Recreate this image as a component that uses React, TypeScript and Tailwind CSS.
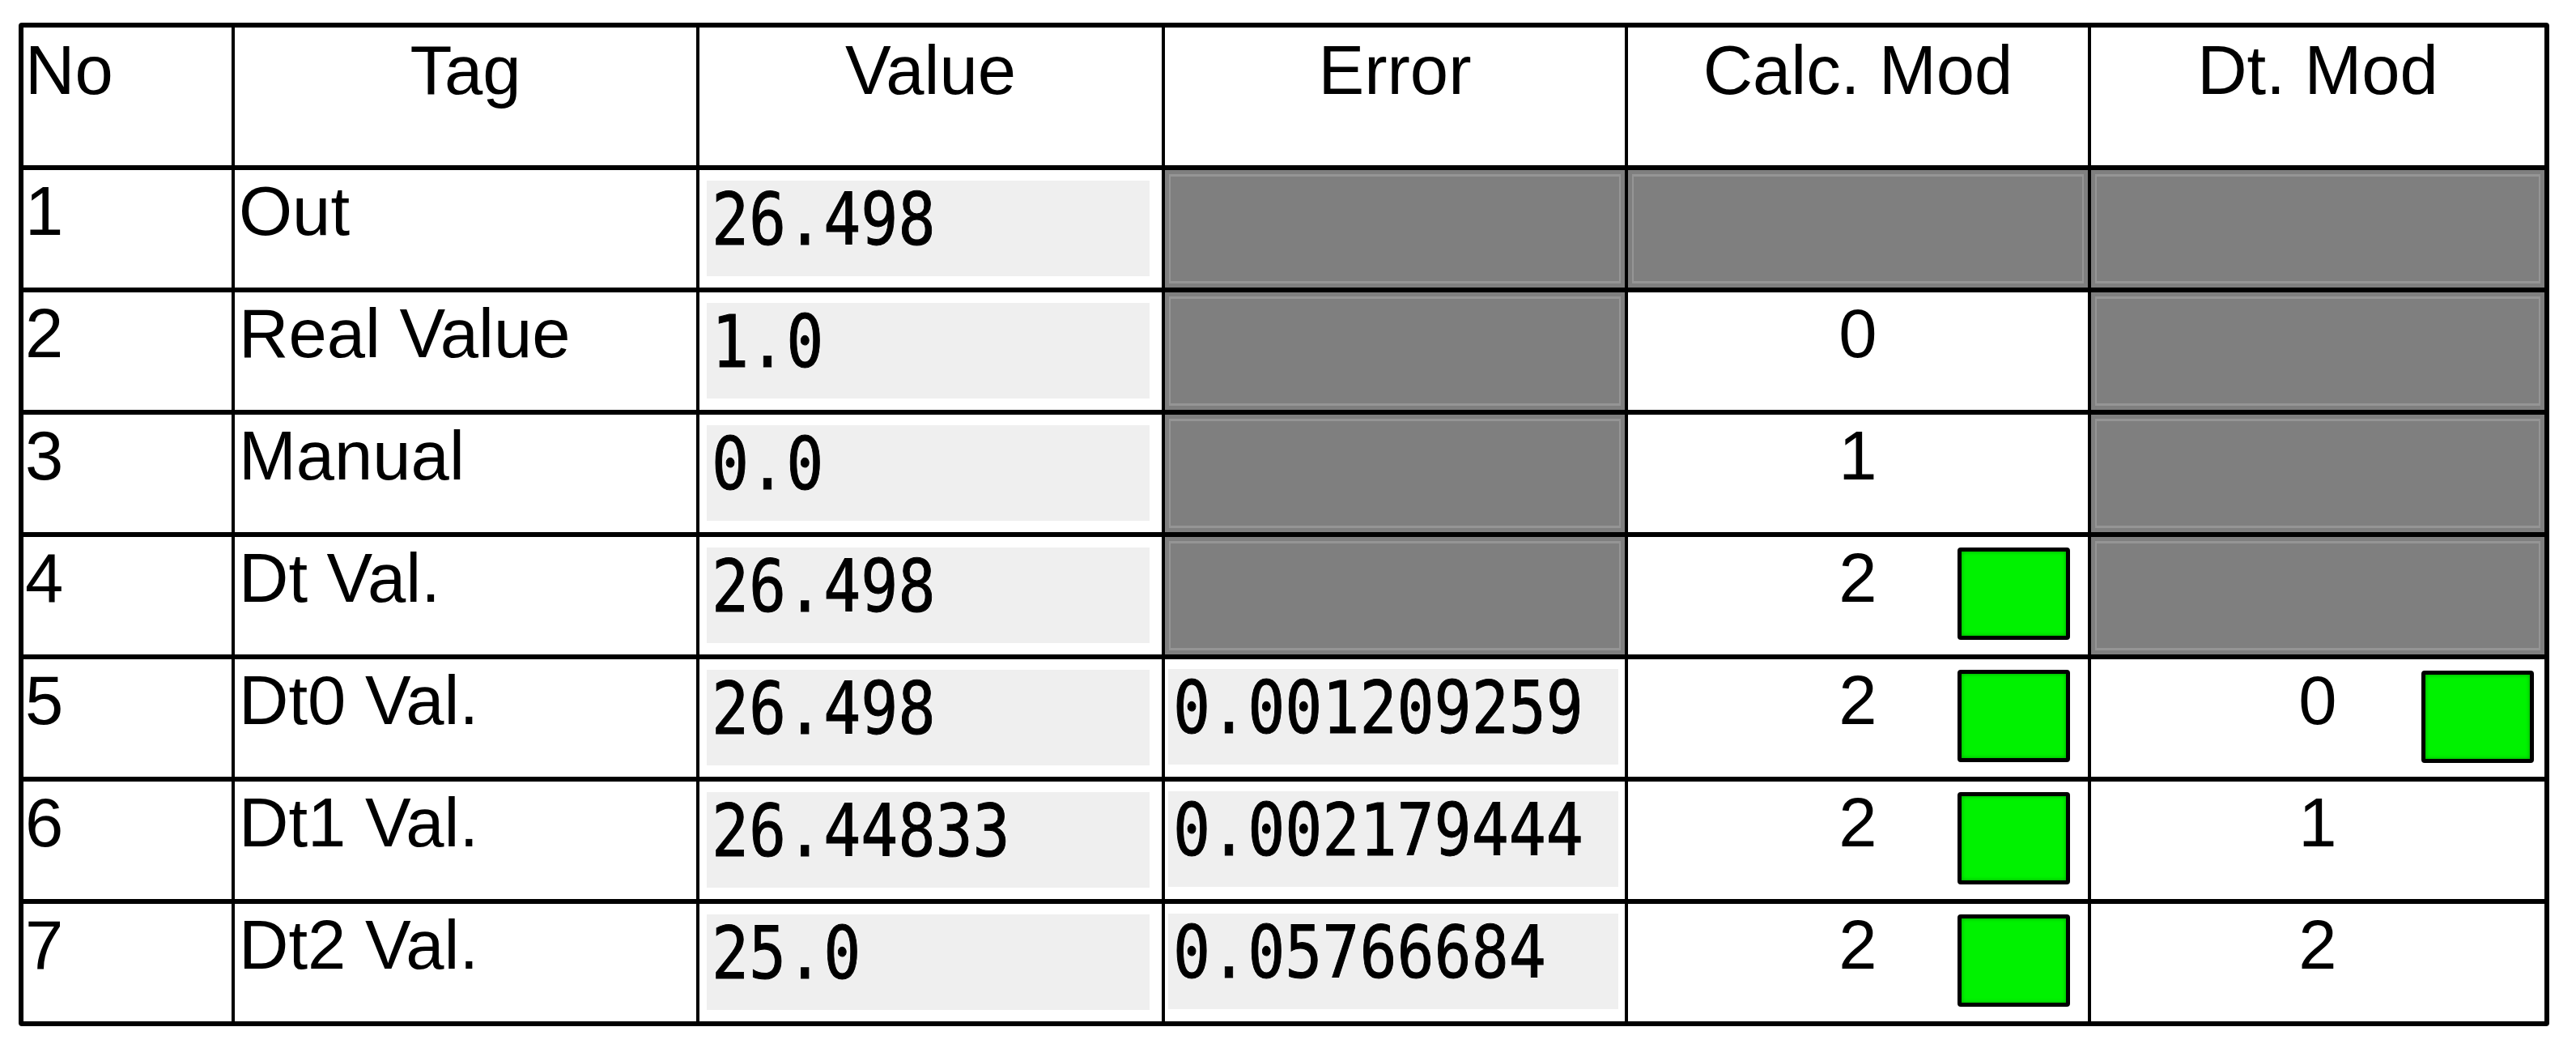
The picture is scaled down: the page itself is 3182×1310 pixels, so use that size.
type Mod = { v: string; ok?: boolean } | null;

type Row = {
  no: number;
  tag: string;
  value: string;
  error: string | null;
  calc: Mod;
  dt: Mod;
};

const rows: Row[] = [
  { no: 1, tag: "Out", value: "26.498", error: null, calc: null, dt: null },
  { no: 2, tag: "Real Value", value: "1.0", error: null, calc: { v: "0" }, dt: null },
  { no: 3, tag: "Manual", value: "0.0", error: null, calc: { v: "1" }, dt: null },
  { no: 4, tag: "Dt Val.", value: "26.498", error: null, calc: { v: "2", ok: true }, dt: null },
  { no: 5, tag: "Dt0 Val.", value: "26.498", error: "0.001209259", calc: { v: "2", ok: true }, dt: { v: "0", ok: true } },
  { no: 6, tag: "Dt1 Val.", value: "26.44833", error: "0.002179444", calc: { v: "2", ok: true }, dt: { v: "1" } },
  { no: 7, tag: "Dt2 Val.", value: "25.0", error: "0.05766684", calc: { v: "2", ok: true }, dt: { v: "2" } },
];

const sans = "font-['Liberation_Sans',Arial,sans-serif] text-[85px] leading-none text-black";

function Disabled() {
  return (
    <div className="bg-[#7f7f7f] p-[5px]">
      <div className="h-full border-y-[3px] border-x-2 border-[#959595]" />
    </div>
  );
}

function Readout({ text, box }: { text: string; box: string }) {
  return (
    <div className="bg-white">
      <div className={`h-[118px] bg-[#efefef] pt-[4px] pl-[6px] ${box}`}>
        <span className="inline-block origin-left scale-x-[0.86] font-['DejaVu_Sans_Mono',monospace] text-[89px] leading-none text-black [-webkit-text-stroke:1px_#000] [text-shadow:0_0_3px_#fff]">
          {text}
        </span>
      </div>
    </div>
  );
}

function ModCell({ mod, boxMargin }: { mod: Mod; boxMargin: string }) {
  if (!mod) return <Disabled />;
  return (
    <div className="grid grid-cols-[1fr_auto_1fr] bg-white">
      <div />
      <div className={`${sans} pt-[8px]`}>{mod.v}</div>
      <div className="flex justify-end">
        {mod.ok && (
          <div
            className={`h-[114px] w-[139px] rounded-[4px] border-[5px] border-black bg-[#00f200] shadow-[inset_0_0_5px_#00a000] ${boxMargin}`}
          />
        )}
      </div>
    </div>
  );
}

export default function App() {
  return (
    <main className="min-h-[1310px] bg-white pl-[23px] pt-[28px]">
      <div className="grid w-fit grid-cols-[257px_570px_571px_568px_568px_560px] grid-rows-[170px_repeat(7,145px)] gap-x-[4px] gap-y-[6px] rounded-[4px] bg-black p-[6px]">
        <div className={`bg-white pt-[10px] pl-[2px] ${sans}`}>No</div>
        <div className={`bg-white pt-[10px] text-center ${sans}`}>Tag</div>
        <div className={`bg-white pt-[10px] text-center ${sans}`}>Value</div>
        <div className={`bg-white pt-[10px] text-center ${sans}`}>Error</div>
        <div className={`bg-white pt-[10px] text-center ${sans}`}>Calc. Mod</div>
        <div className={`bg-white pt-[10px] text-center ${sans}`}>Dt. Mod</div>

        {rows.map((r) => (
          <div key={r.no} className="contents">
            <div className={`bg-white pt-[8px] pl-[2px] ${sans}`}>{r.no}</div>
            <div className={`bg-white pt-[8px] pl-[5px] ${sans}`}>{r.tag}</div>
            <Readout text={r.value} box="mt-[13px] ml-[9px] mr-[15px]" />
            {r.error ? (
              <Readout text={r.error} box="mt-[12px] ml-[4px] mr-[8px]" />
            ) : (
              <Disabled />
            )}
            <ModCell mod={r.calc} boxMargin="mt-[13px] mr-[22px]" />
            <ModCell mod={r.dt} boxMargin="mt-[14px] mr-[13px]" />
          </div>
        ))}
      </div>
    </main>
  );
}
